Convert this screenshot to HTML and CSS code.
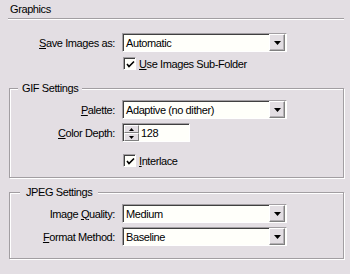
FILE: index.html
```html
<!DOCTYPE html>
<html>
<head>
<meta charset="utf-8">
<link rel="stylesheet" href="styles.css">
</head>
<body>
<div class="panel">
  <div class="title">Graphics</div>
  <div class="rule"></div>

  <div class="row first">
    <span class="lbl"><u>S</u>ave Images as:</span>
    <div class="select">
      <span class="field">Automatic</span>
      <span class="drop"><svg width="7" height="4" viewBox="0 0 7 4"><polygon points="0,0 7,0 3.5,4" fill="#000"/></svg></span>
    </div>
  </div>
  <div class="row crow">
    <span></span>
    <span class="check"><span class="box"><svg width="9" height="9" viewBox="0 0 9 9"><polyline points="1,4 3,6.5 8,1.5" fill="none" stroke="#000" stroke-width="1.6"/></svg></span><span><u>U</u>se Images Sub-Folder</span></span>
  </div>

  <div class="group gif">
    <span class="legend">GIF Settings</span>
    <div class="row">
      <span class="lbl"><u>P</u>alette:</span>
      <div class="select">
        <span class="field">Adaptive (no dither)</span>
        <span class="drop"><svg width="7" height="4" viewBox="0 0 7 4"><polygon points="0,0 7,0 3.5,4" fill="#000"/></svg></span>
      </div>
    </div>
    <div class="row gap">
      <span class="lbl"><u>C</u>olor Depth:</span>
      <div class="spin">
        <span class="btns">
          <span class="sb"><svg width="5" height="3" viewBox="0 0 5 3"><polygon points="2.5,0 5,3 0,3" fill="#000"/></svg></span>
          <span class="sb"><svg width="5" height="3" viewBox="0 0 5 3"><polygon points="0,0 5,0 2.5,3" fill="#000"/></svg></span>
        </span>
        <span class="num">128</span>
      </div>
    </div>
    <div class="row crow2">
      <span></span>
      <span class="check"><span class="box"><svg width="9" height="9" viewBox="0 0 9 9"><polyline points="1,4 3,6.5 8,1.5" fill="none" stroke="#000" stroke-width="1.6"/></svg></span><span><u>I</u>nterlace</span></span>
    </div>
  </div>

  <div class="group jpeg">
    <span class="legend">JPEG Settings</span>
    <div class="row">
      <span class="lbl">Image <u>Q</u>uality:</span>
      <div class="select">
        <span class="field">Medium</span>
        <span class="drop"><svg width="7" height="4" viewBox="0 0 7 4"><polygon points="0,0 7,0 3.5,4" fill="#000"/></svg></span>
      </div>
    </div>
    <div class="row gap">
      <span class="lbl"><u>F</u>ormat Method:</span>
      <div class="select">
        <span class="field">Baseline</span>
        <span class="drop"><svg width="7" height="4" viewBox="0 0 7 4"><polygon points="0,0 7,0 3.5,4" fill="#000"/></svg></span>
      </div>
    </div>
  </div>
</div>
</body>
</html>
```

FILE: styles.css
```css
html, body {
  margin: 0;
  padding: 0;
  background: #e3dee3;
}
body {
  width: 350px;
  height: 274px;
  overflow: hidden;
  font-family: "Liberation Sans", Arial, sans-serif;
  font-size: 11px;
  letter-spacing: -0.4px;
  color: #000;
}
.panel {
  padding: 0 6px 0 8px;
}
.title {
  padding: 3px 0 0 2px;
  line-height: 13px;
  height: 13px;
}
.rule {
  margin-top: 2px;
  height: 0;
  border-top: 1px solid #a29ea2;
  border-bottom: 1px solid #fff;
}
.row {
  display: grid;
  grid-template-columns: 107px 165px;
  column-gap: 7px;
  align-items: center;
}
.row.first {
  margin-top: 13px;
}
.row.gap {
  margin-top: 4px;
}
.row.crow {
  margin-top: 4px;
  height: 15px;
}
.row.crow2 {
  margin-top: 11px;
  height: 15px;
}
.lbl {
  text-align: right;
  white-space: nowrap;
}
.select {
  height: 19px;
  box-sizing: border-box;
  display: flex;
  align-items: stretch;
  border: 1px solid;
  border-color: #a29ea2 #fff #fff #a29ea2;
  background: #fffffa;
}
.field {
  flex: 1;
  display: flex;
  align-items: center;
  padding-left: 3px;
  box-shadow: inset 1px 1px 0 #404040;
  white-space: nowrap;
  overflow: hidden;
}
.drop {
  width: 16px;
  box-sizing: border-box;
  display: flex;
  align-items: center;
  justify-content: center;
  background: #e3dee3;
  border: 1px solid;
  border-color: #fff #808080 #808080 #fff;
  box-shadow: inset -1px -1px 0 #b4b0b4;
  margin: 0 1px 0 0;
}
.spin {
  width: 68px;
  height: 19px;
  box-sizing: border-box;
  display: flex;
  border: 1px solid;
  border-color: #a29ea2 #fff #fff #a29ea2;
  background: #fffffa;
  box-shadow: inset 1px 1px 0 #404040;
}
.btns {
  display: flex;
  flex-direction: column;
  width: 15px;
  padding: 1px 0 0 1px;
}
.sb {
  flex: 1;
  display: flex;
  align-items: center;
  justify-content: center;
  background: #e3dee3;
  border: 1px solid;
  border-color: #fff #808080 #808080 #fff;
}
.num {
  display: flex;
  align-items: center;
  padding-left: 2px;
}
.check {
  display: flex;
  align-items: center;
  gap: 3px;
  margin-left: 1px;
  white-space: nowrap;
}
.box {
  width: 13px;
  height: 13px;
  box-sizing: border-box;
  display: flex;
  align-items: center;
  justify-content: center;
  border: 1px solid;
  border-color: #a29ea2 #fff #fff #a29ea2;
  box-shadow: inset 1px 1px 0 #404040;
  background: #fffffa;
  padding: 1px 0 0 1px;
}
.group {
  position: relative;
  margin-left: 1px;
  border: 1px solid #a29ea2;
  box-shadow: inset 1px 1px 0 #fff, 1px 1px 0 #fff;
}
.group .row {
  grid-template-columns: 105px 165px;
}
.group.gif {
  margin-top: 17px;
  padding: 11px 0 9px 0;
}
.group.jpeg {
  margin-top: 14px;
  padding: 11px 0 12px 0;
}
.legend {
  position: absolute;
  top: -8px;
  left: 8px;
  padding: 0 4px;
  line-height: 14px;
  background: #e3dee3;
}
.group.jpeg .legend {
  left: 10px;
  padding: 0 6px 0 6px;
}
```
